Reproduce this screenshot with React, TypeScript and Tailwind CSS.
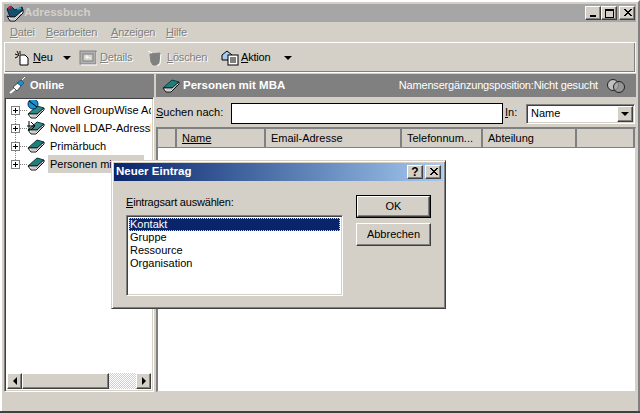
const raised = 'border border-t-white border-l-white border-r-[#404040] border-b-[#404040] shadow-[inset_-1px_-1px_0_#808080]';
const sunken = 'border border-t-[#808080] border-l-[#808080] border-r-white border-b-white shadow-[inset_1px_1px_0_#404040,inset_-1px_-1px_0_#d4d0c8]';

function Book({ color = '#1f7f7f' }: { color?: string }) {
  return (
    <svg width="18" height="14" viewBox="0 0 18 14" className="shrink-0">
      <path d="M1 9 L10 1 L17 3 L10 9 L4 9 Z" fill={color} stroke="#0b3a3a" strokeWidth="1" />
      <path d="M1 9 L4 9 L10 9 L17 3 L17 5 L9 13 L4 13 Z" fill="#fff" stroke="#111" strokeWidth="1" />
      <path d="M4 11 L9 11 L15 6" fill="none" stroke="#999" strokeWidth="1" />
    </svg>
  );
}

function TitleIcon() {
  return (
    <svg width="18" height="17" viewBox="0 0 18 17" className="shrink-0">
      <path d="M1 4 L5 1 L9 5 L16 2 L17 5 L9 12 L4 12 Z" fill="#14506e" stroke="#0b1a3a" strokeWidth="1" />
      <path d="M2 3 L6 2" stroke="#d02030" strokeWidth="2" />
      <path d="M11 4 L15 3" stroke="#30b0c0" strokeWidth="2" />
      <path d="M1 11 L4 12 L9 12 L17 5 L17 8 L9 16 L4 16 Z" fill="#fff" stroke="#111" strokeWidth="1" />
      <path d="M4 14 L9 14 L15 9" fill="none" stroke="#999" strokeWidth="1" />
    </svg>
  );
}

function GroupWiseBook() {
  return (
    <div className="relative w-[18px] h-[18px] shrink-0 flex items-end">
      <Book color="#2a8a8a" />
      <svg width="12" height="12" viewBox="0 0 12 12" className="absolute left-[0px] -top-[3px]">
        <circle cx="6" cy="6" r="5" fill="#1e90d0" stroke="#0b2a5a" />
        <path d="M2 3 L10 9" stroke="#000" />
      </svg>
    </div>
  );
}

function LdapBook() {
  return (
    <div className="relative w-[18px] h-[14px] shrink-0">
      <Book color="#3a8f8f" />
      <svg width="10" height="12" viewBox="0 0 10 12" className="absolute left-0 -top-[1px]">
        <path d="M0 6 H7 M4 2 L8 6 L4 10 M2 1 V11" fill="none" stroke="#000" />
      </svg>
    </div>
  );
}

function PlusBox() {
  return (
    <span className="relative z-10 w-[9px] h-[9px] border border-[#808080] bg-white flex items-center justify-center shrink-0">
      <span className="absolute w-[5px] h-px bg-black" />
      <span className="absolute w-px h-[5px] bg-black" />
    </span>
  );
}

function TreeRow({ label, icon, selected }: { label: string; icon: React.ReactNode; selected?: boolean }) {
  return (
    <div className="h-[18px] flex items-center">
      <div className="w-[4px] shrink-0" />
      <PlusBox />
      <div className="w-[7px] shrink-0 border-t border-dotted border-[#808080]" />
      <div className="w-[18px] shrink-0 flex justify-center">{icon}</div>
      <div className={`ml-[3px] h-[18px] shrink-0 flex items-center whitespace-nowrap px-[2px] ${selected ? 'bg-[#d4d0c8]' : ''}`}>{label}</div>
    </div>
  );
}

function WinButton({ children, className = '' }: { children: React.ReactNode; className?: string }) {
  return <div className={`w-[16px] h-[14px] bg-[#d4d0c8] flex items-center justify-center ${raised} ${className}`}>{children}</div>;
}

function CloseGlyph() {
  return (
    <svg width="9" height="8" viewBox="0 0 9 8">
      <path d="M1 0 L8 7 M2 0 L9 7 M8 0 L1 7 M9 0 L2 7" stroke="#000" strokeWidth="1" />
    </svg>
  );
}

function DropArrow() {
  return <span className="w-0 h-0 border-x-[4px] border-x-transparent border-t-[4px] border-t-black" />;
}

function HeaderCell({ w, children, grow }: { w?: string; children?: React.ReactNode; grow?: boolean }) {
  return (
    <div className={`h-[19px] bg-[#d4d0c8] flex items-center pl-[5px] border-r-2 border-r-[#808080] border-b border-b-[#808080] whitespace-nowrap ${w ?? ''} ${grow ? 'flex-1' : ''}`}>
      {children}
    </div>
  );
}

export default function App() {
  return (
    <div className="relative w-[640px] h-[413px] overflow-hidden bg-[#d4d0c8] text-[11px] leading-none text-black font-['Liberation_Sans',sans-serif]">
      <div className="h-[411px] border-t-2 border-l-2 border-r-2 border-t-white border-l-white border-r-[#808080] p-[2px] flex flex-col">
        <div className="h-[18px] bg-[#a6a6a6] flex items-center pl-[2px] pr-[1px] shrink-0">
          <TitleIcon />
          <span className="font-bold text-[11.5px] text-[#d4d0c8]">Adressbuch</span>
          <div className="ml-auto flex items-center">
            <WinButton><span className="w-[6px] h-[2px] bg-black mt-[6px]" /></WinButton>
            <WinButton><span className="w-[9px] h-[9px] border border-black border-t-2" /></WinButton>
            <WinButton className="ml-[2px]"><CloseGlyph /></WinButton>
          </div>
        </div>

        <div className="h-[20px] flex items-center pl-[6px] text-[#808080] tracking-[-0.2px] [text-shadow:1px_1px_0_#f4f4f0] shrink-0">
          <span className="w-[36px]"><u>D</u>atei</span>
          <span className="w-[65px]"><u>B</u>earbeiten</span>
          <span className="w-[55px]"><u>A</u>nzeigen</span>
          <span><u>H</u>ilfe</span>
        </div>

        <div className="h-[31px] border border-white border-r-[#f4f4f0] shadow-[inset_-1px_-1px_0_#808080] flex items-center pl-[9px] tracking-[-0.2px] shrink-0">
          <svg width="16" height="16" viewBox="0 0 16 16" className="shrink-0">
            <path d="M6 5 L11 5 L14 8 L14 15 L6 15 Z" fill="#fff" stroke="#000" />
            <path d="M3 1 L5 5 M1 4 L5 5.500 M6 1 L6 4 M1 8 L4 6.500" stroke="#000" />
          </svg>
          <span className="ml-[3px] w-[18px]"><u>N</u>eu</span>
          <span className="ml-[12px] flex"><DropArrow /></span>
          <svg width="18" height="16" viewBox="0 0 18 16" className="ml-[8px] shrink-0">
            <rect x="1" y="1" width="16" height="13" fill="#b0b0b0" stroke="#808080" />
            <rect x="4" y="4" width="10" height="7" fill="#d4d0c8" stroke="#808080" />
            <path d="M7 6 h2 v2 h-2 z M10 8 h2" stroke="#fff" fill="none" />
            <path d="M2 15 H18 M18 2 V15" stroke="#fff" />
          </svg>
          <span className="ml-[3px] w-[33px] text-[#808080] [text-shadow:1px_1px_0_#fff]"><u>D</u>etails</span>
          <svg width="16" height="16" viewBox="0 0 16 16" className="ml-[14px] shrink-0">
            <path d="M3 4 L13 3 L12 13 L9 15 L6 15 L4 12 Z" fill="#808080" stroke="#808080" />
            <path d="M1 1 L5 3" stroke="#fff" />
            <path d="M14 4 L13 14 L10 16" fill="none" stroke="#fff" />
          </svg>
          <span className="ml-[4px] w-[39px] text-[#808080] [text-shadow:1px_1px_0_#fff]"><u>L</u>öschen</span>
          <svg width="18" height="16" viewBox="0 0 18 16" className="ml-[15px] shrink-0">
            <path d="M1 5 L6 1 L11 5 L11 10 L1 10 Z" fill="#a6caf0" stroke="#000" />
            <rect x="7" y="5" width="10" height="10" fill="#fff" stroke="#000" />
            <path d="M9 8 h6 M9 10 h6 M9 12 h6" stroke="#000" />
          </svg>
          <span className="ml-[2px] w-[30px]"><u>A</u>ktion</span>
          <span className="ml-[13px] flex"><DropArrow /></span>
        </div>

        <div className="flex-1 flex min-h-0 mt-[1px]">
          <div className="w-[150px] flex flex-col shrink-0">
            <div className="h-[23px] bg-[#808080] flex items-center pl-[5px] text-white font-bold text-[11px] shrink-0">
              <svg width="18" height="18" viewBox="0 0 18 18" className="shrink-0">
                <path d="M1 16 L6 12" stroke="#fff" strokeWidth="2" />
                <path d="M4 10 L9 6 L12 9 L8 14 Z" fill="#fff" stroke="#000" strokeWidth="0.6" />
                <path d="M8 6 L12 3 L15 6 L12 9 Z" fill="#1e90d0" stroke="#0b3a6a" strokeWidth="0.6" />
                <path d="M13 3 L16 0" stroke="#fff" />
              </svg>
              <span className="ml-[3px]">Online</span>
            </div>
            <div className={`flex-1 bg-white overflow-hidden flex flex-col ${sunken} p-[2px]`}>
              <div className="flex-1 pt-[1px] overflow-hidden relative">
                <div className="absolute left-[8px] top-[12px] h-[54px] border-l border-dotted border-[#808080]" />
                <TreeRow label="Novell GroupWise Adressbuch" icon={<GroupWiseBook />} />
                <TreeRow label="Novell LDAP-Adressbuch" icon={<LdapBook />} />
                <TreeRow label="Primärbuch" icon={<Book />} />
                <TreeRow label="Personen mit MBA" icon={<Book />} selected />
              </div>
              <div className="h-[16px] flex shrink-0">
                <div className={`w-[15px] bg-[#d4d0c8] flex items-center justify-center ${raised}`}>
                  <span className="w-0 h-0 border-y-[4px] border-y-transparent border-r-[4px] border-r-black" />
                </div>
                <div className={`w-[87px] bg-[#d4d0c8] ${raised}`} />
                <div className="flex-1 bg-[repeating-conic-gradient(#d4d0c8_0_25%,#fff_0_50%)] bg-[length:2px_2px]" />
                <div className={`w-[15px] bg-[#d4d0c8] flex items-center justify-center ${raised}`}>
                  <span className="w-0 h-0 border-y-[4px] border-y-transparent border-l-[4px] border-l-black" />
                </div>
              </div>
            </div>
          </div>

          <div className="flex-1 min-w-0 ml-[2px] flex flex-col">
            <div className="h-[23px] bg-[#808080] flex items-center pl-[6px] pr-[10px] text-white shrink-0">
              <Book />
              <span className="ml-[3px] font-bold text-[11.5px]">Personen mit MBA</span>
              <span className="ml-auto tracking-[-0.18px]">Namensergänzungsposition:Nicht gesucht</span>
              <svg width="20" height="16" viewBox="0 0 20 16" className="ml-[8px] shrink-0">
                <circle cx="7" cy="7" r="5.500" fill="#c0c0c0" stroke="#222" />
                <circle cx="13" cy="9" r="5.500" fill="#a0a0a0" fillOpacity="0.7" stroke="#222" />
              </svg>
            </div>

            <div className="h-[30px] flex items-center pt-[3px] shrink-0">
              <span className="w-[75px] -mt-[2px] whitespace-nowrap"><u>S</u>uchen nach:</span>
              <div className="w-[272px] h-[21px] bg-white border border-black" />
              <span className="ml-[2px] w-[21px] -mt-[2px]"><u>I</u>n:</span>
              <div className={`w-[109px] h-[20px] bg-white flex items-center pl-[4px] ${sunken}`}>
                <span>Name</span>
                <div className={`ml-auto w-[16px] h-[16px] mr-[1px] bg-[#d4d0c8] flex items-center justify-center ${raised}`}>
                  <DropArrow />
                </div>
              </div>
            </div>

            <div className="flex-1 flex flex-col min-h-0 bg-white border-t-2 border-l-2 border-[#808080] border-r border-r-[#d4d0c8] border-b border-b-[#d4d0c8]">
              <div className="flex shrink-0">
                <HeaderCell w="w-[19px]" />
                <HeaderCell w="w-[89px]"><u>Name</u></HeaderCell>
                <HeaderCell w="w-[136px]">Email-Adresse</HeaderCell>
                <HeaderCell w="w-[81px]">Telefonnum...</HeaderCell>
                <HeaderCell w="w-[94px]">Abteilung</HeaderCell>
                <HeaderCell grow />
              </div>
            </div>
          </div>
        </div>

        <div className="h-[17px] shrink-0" />
      </div>
      <div className="h-[2px] bg-[#404040]" />

      <div className="absolute left-[111px] top-[160px] w-[335px] h-[149px] bg-[#d4d0c8] border border-t-[#d4d0c8] border-l-[#d4d0c8] border-r-[#404040] border-b-[#404040] shadow-[inset_1px_1px_0_#fff,inset_-1px_-1px_0_#808080] p-[2px]">
        <div className="h-[18px] flex items-center pl-[2px] pr-[2px] bg-gradient-to-r from-[#0a246a] to-[#a6caf0] text-white font-bold text-[11.5px]">
          <span>Neuer Eintrag</span>
          <div className="ml-auto flex gap-[2px]">
            <WinButton><span className="text-black font-bold text-[12px]">?</span></WinButton>
            <WinButton><CloseGlyph /></WinButton>
          </div>
        </div>
        <div className="flex pl-[12px] pt-[14px]">
          <div className="w-[217px]">
            <div className="h-[20px] pt-[2px] tracking-[-0.2px]"><u>E</u>intragsart auswählen:</div>
            <div className={`h-[81px] bg-white p-[2px] ${sunken}`}>
              <div className="h-[13px] bg-[#0a246a] text-white pl-[1px] flex items-center outline-1 -outline-offset-1 outline-dotted outline-[#d4d0c8]">Kontakt</div>
              <div className="h-[13px] pl-[1px] flex items-center">Gruppe</div>
              <div className="h-[13px] pl-[1px] flex items-center">Ressource</div>
              <div className="h-[13px] pl-[1px] flex items-center">Organisation</div>
            </div>
          </div>
          <div className="ml-[13px] w-[75px] flex flex-col gap-[5px]">
            <div className="h-[23px] border border-black">
              <div className={`h-full bg-[#d4d0c8] flex items-center justify-center ${raised}`}>OK</div>
            </div>
            <div className={`h-[23px] bg-[#d4d0c8] flex items-center justify-center ${raised}`}>Abbrechen</div>
          </div>
        </div>
      </div>
    </div>
  );
}
